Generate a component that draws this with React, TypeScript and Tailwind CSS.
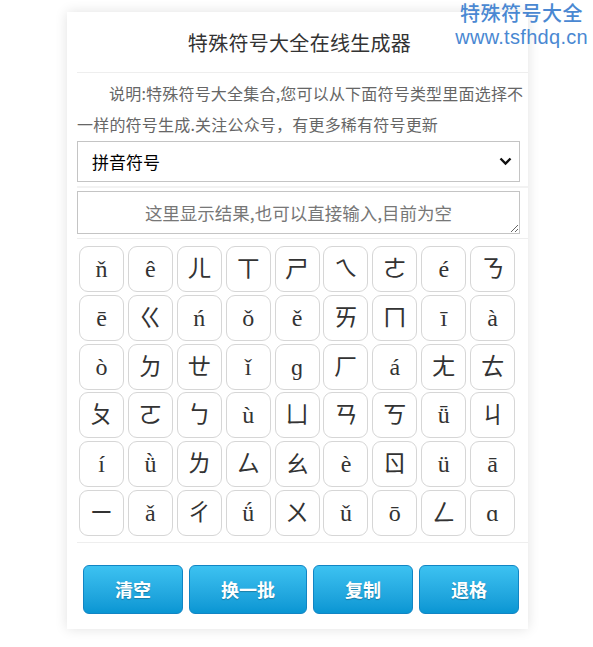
const symbols = [
  'ň', 'ê', 'ㄦ', 'ㄒ', 'ㄕ', 'ㄟ', 'ㄜ', 'é', 'ㄋ',
  'ē', 'ㄍ', 'ń', 'ǒ', 'ě', 'ㄞ', 'ㄇ', 'ī', 'à',
  'ò', 'ㄉ', 'ㄝ', 'ǐ', 'ɡ', 'ㄏ', 'á', 'ㄤ', 'ㄊ',
  'ㄆ', 'ㄛ', 'ㄅ', 'ù', 'ㄩ', 'ㄢ', 'ㄎ', 'ǖ', 'ㄐ',
  'í', 'ǜ', 'ㄌ', 'ㄙ', 'ㄠ', 'è', 'ㄖ', 'ü', 'ā',
  'ㄧ', 'ǎ', 'ㄔ', 'ǘ', 'ㄨ', 'ǔ', 'ō', 'ㄥ', 'ɑ',
]

const buttons = ['清空', '换一批', '复制', '退格']

const cjk = "font-['Noto_Sans_CJK_SC',sans-serif]"

export default function App() {
  return (
    <div className={`relative min-h-[647px] bg-white ${cjk}`}>
      {/* watermark */}
      <div className="absolute right-[5px] top-0 z-10 text-center text-[#4a88d2]">
        <div className="text-[20px] font-medium leading-[25px] tracking-[0.5px]">特殊符号大全</div>
        <div className="font-['Liberation_Sans',sans-serif] text-[20px] leading-[25px] tracking-[0.3px]">www.tsfhdq.cn</div>
      </div>

      <div className="ml-[67px] pt-[12px]">
        <div className="w-[461px] bg-white pl-[10px] shadow-[0_0_12px_rgba(0,0,0,0.12)]">
          {/* header */}
          <div className="flex h-[61px] items-center justify-center border-b border-[#eee] pt-[1px] pr-[6px] text-[20px] tracking-[0.3px] text-[#333]">
            特殊符号大全在线生成器
          </div>

          {/* description */}
          <p className="pt-[5px] pr-[2px] indent-[32px] text-[16px] leading-[31px] tracking-[0.2px] text-[#666]">
            说明:特殊符号大全集合,您可以从下面符号类型里面选择不一样的符号生成.关注公众号，有更多稀有符号更新
          </p>

          {/* type select */}
          <div className="border-b-2 border-[#f2f2f2] pt-[1px] pb-[4px]">
            <div className="relative w-[443px]">
              <select className="h-[41px] w-full appearance-none border border-[#c4c4c4] bg-white pl-[14px] text-[17px] text-black outline-none">
                <option>拼音符号</option>
              </select>
              <svg className="pointer-events-none absolute right-[8px] top-[16px]" width="13" height="9" viewBox="0 0 13 9">
                <path d="M1.5 1.5 L6.5 6.5 L11.5 1.5" fill="none" stroke="#111" strokeWidth="2.4" />
              </svg>
            </div>
          </div>

          {/* result */}
          <div className="border-b border-[#eee] pt-[3px] pb-[4px]">
            <textarea
              className="block h-[43px] w-[443px] border border-[#c4c4c4] px-[8px] py-[9px] text-center text-[17.5px] leading-[23px] text-[#333] outline-none placeholder:text-[#777]"
              placeholder="这里显示结果,也可以直接输入,目前为空"
            />
          </div>

          {/* symbol grid */}
          <div className="border-b border-[#eee] pt-[7px] pb-[6px] pl-[2px]">
            <div className="grid grid-cols-[repeat(9,45px)] gap-x-[3.9px] gap-y-[2.8px]">
              {symbols.map((s, i) => (
                <div
                  key={i}
                  className="flex h-[46px] items-center justify-center rounded-[9px] border border-[#d6d6d6] font-['Liberation_Serif','Noto_Sans_CJK_SC',serif] text-[24px] text-[#333]"
                >
                  {s}
                </div>
              ))}
            </div>
          </div>

          {/* actions */}
          <div className="flex gap-[6px] pt-[22px] pb-[15px] pl-[6px]">
            {buttons.map((b) => (
              <button
                key={b}
                className="h-[49px] rounded-[6px] border border-[#1185c4] bg-gradient-to-b from-[#3cc2f1] to-[#0896d3] px-[31px] text-[18px] font-bold text-white [text-shadow:0_1px_1px_rgba(0,0,0,0.25)]"
              >
                {b}
              </button>
            ))}
          </div>
        </div>
      </div>
    </div>
  )
}
